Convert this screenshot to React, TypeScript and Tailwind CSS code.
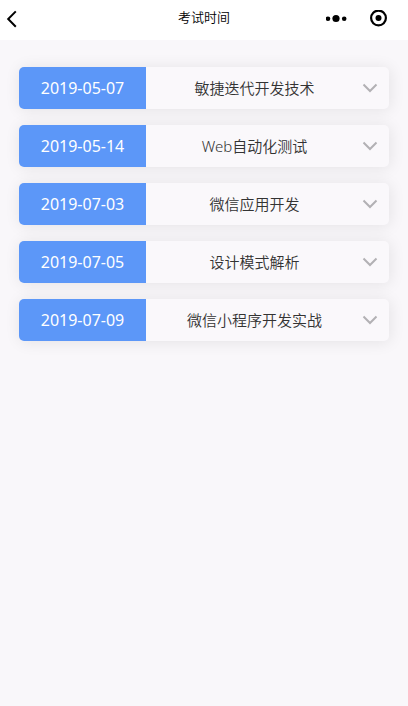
const exams = [
  { date: "2019-05-07", course: "敏捷迭代开发技术" },
  { date: "2019-05-14", course: "Web自动化测试" },
  { date: "2019-07-03", course: "微信应用开发" },
  { date: "2019-07-05", course: "设计模式解析" },
  { date: "2019-07-09", course: "微信小程序开发实战" },
]

function NavBar() {
  return (
    <header className="grid h-10 grid-cols-[1fr_auto_1fr] items-center bg-white text-black">
      <button type="button" aria-label="返回" className="justify-self-start pl-1">
        <svg width="16" height="20" viewBox="0 0 16 20" fill="none" className="block">
          <path d="M11.8 1.4 4.2 9l7.6 7.8" stroke="currentColor" strokeWidth="2" />
        </svg>
      </button>
      <h1 className="pb-1.5 text-[13px] leading-5 font-[350]">考试时间</h1>
      <div className="flex items-center gap-5 justify-self-end pr-5">
        <button type="button" aria-label="更多">
          <svg width="22" height="20" viewBox="0 0 22 20" fill="currentColor" className="block">
            <circle cx="2" cy="8.7" r="2.3" />
            <circle cx="10" cy="8.5" r="3.6" />
            <circle cx="18.2" cy="8.7" r="2.3" />
          </svg>
        </button>
        <button type="button" aria-label="关闭">
          <svg width="20" height="20" viewBox="0 0 20 20" className="block">
            <circle cx="10.5" cy="8" r="7.4" fill="none" stroke="currentColor" strokeWidth="2.2" />
            <circle cx="10.5" cy="8" r="3" fill="currentColor" />
          </svg>
        </button>
      </div>
    </header>
  )
}

function ExamRow({ date, course }: { date: string; course: string }) {
  return (
    <li>
      <button
        type="button"
        className="flex h-[42px] w-full items-stretch overflow-hidden rounded-[5px] bg-[#faf8fb] shadow-[1px_1px_16px_rgba(0,0,0,0.09)]"
      >
        <span className="flex w-[127px] items-center justify-center bg-[#5c97f8] text-base text-white">
          {date}
        </span>
        <span className="flex flex-1 items-center justify-center text-[15px] font-[350] text-[#333333]">
          {course}
        </span>
        <span className="flex w-[26px] items-center">
          <svg width="16" height="10" viewBox="0 0 16 10" fill="none" className="-ml-px shrink-0">
            <path d="m1.5 1.5 6.5 6.5 6.5-6.5" stroke="#b2b1b4" strokeWidth="2" />
          </svg>
        </span>
      </button>
    </li>
  )
}

export default function App() {
  return (
    <div className="min-h-screen bg-[#f9f7fa] font-['Noto_Sans','Noto_Sans_CJK_SC',sans-serif]">
      <NavBar />
      <main className="px-[19px] pt-[27px] pb-6">
        <ul className="flex flex-col gap-4">
          {exams.map((exam) => (
            <ExamRow key={exam.date} {...exam} />
          ))}
        </ul>
      </main>
    </div>
  )
}
